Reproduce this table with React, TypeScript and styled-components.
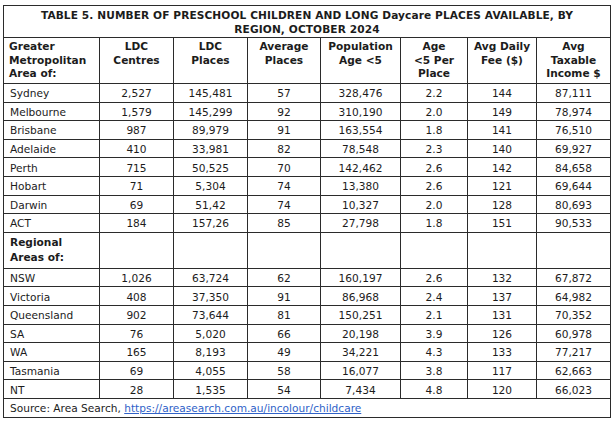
import styled, { createGlobalStyle } from 'styled-components'

type Row = [string, string, string, string, string, string, string, string]

const metro: Row[] = [
  ['Sydney', '2,527', '145,481', '57', '328,476', '2.2', '144', '87,111'],
  ['Melbourne', '1,579', '145,299', '92', '310,190', '2.0', '149', '78,974'],
  ['Brisbane', '987', '89,979', '91', '163,554', '1.8', '141', '76,510'],
  ['Adelaide', '410', '33,981', '82', '78,548', '2.3', '140', '69,927'],
  ['Perth', '715', '50,525', '70', '142,462', '2.6', '142', '84,658'],
  ['Hobart', '71', '5,304', '74', '13,380', '2.6', '121', '69,644'],
  ['Darwin', '69', '51,42', '74', '10,327', '2.0', '128', '80,693'],
  ['ACT', '184', '157,26', '85', '27,798', '1.8', '151', '90,533'],
]

const regional: Row[] = [
  ['NSW', '1,026', '63,724', '62', '160,197', '2.6', '132', '67,872'],
  ['Victoria', '408', '37,350', '91', '86,968', '2.4', '137', '64,982'],
  ['Queensland', '902', '73,644', '81', '150,251', '2.1', '131', '70,352'],
  ['SA', '76', '5,020', '66', '20,198', '3.9', '126', '60,978'],
  ['WA', '165', '8,193', '49', '34,221', '4.3', '133', '77,217'],
  ['Tasmania', '69', '4,055', '58', '16,077', '3.8', '117', '62,663'],
  ['NT', '28', '1,535', '54', '7,434', '4.8', '120', '66,023'],
]

const columnWidths = [96, 74, 74, 73, 80, 67, 69, 74]

const headings: string[][] = [
  ['Greater', 'Metropolitan', 'Area of:'],
  ['LDC', 'Centres'],
  ['LDC', 'Places'],
  ['Average', 'Places'],
  ['Population', 'Age <5'],
  ['Age', '<5 Per', 'Place'],
  ['Avg Daily', 'Fee ($)'],
  ['Avg', 'Taxable', 'Income $'],
]

export default function App() {
  return (
    <>
      <GlobalStyle />
      <Page>
        <Table>
          <colgroup>
            {columnWidths.map((w, i) => (
              <col key={i} style={{ width: w }} />
            ))}
          </colgroup>
          <tbody>
            <tr>
              <TitleCell colSpan={8}>
                TABLE 5. NUMBER OF PRESCHOOL CHILDREN AND LONG Daycare PLACES AVAILABLE, BY
                <br />
                REGION, OCTOBER 2024
              </TitleCell>
            </tr>
            <tr>
              {headings.map((lines, i) => (
                <HeadCell key={i} $first={i === 0}>
                  {lines.map((line, j) => (
                    <span key={j}>
                      {j > 0 && <br />}
                      {line}
                    </span>
                  ))}
                </HeadCell>
              ))}
            </tr>
            {metro.map((row) => (
              <DataRow key={row[0]} row={row} />
            ))}
            <tr>
              <SectionCell>
                Regional
                <br />
                Areas of:
              </SectionCell>
              {Array.from({ length: 7 }).map((_, i) => (
                <SectionCell key={i} />
              ))}
            </tr>
            {regional.map((row) => (
              <DataRow key={row[0]} row={row} />
            ))}
            <tr>
              <SourceCell colSpan={8}>
                Source: Area Search,{' '}
                <SourceLink href="#">https://areasearch.com.au/incolour/childcare</SourceLink>
              </SourceCell>
            </tr>
          </tbody>
        </Table>
      </Page>
    </>
  )
}

function DataRow({ row }: { row: Row }) {
  return (
    <tr>
      {row.map((value, i) => (
        <Cell key={i} $first={i === 0}>
          {value}
        </Cell>
      ))}
    </tr>
  )
}

const GlobalStyle = createGlobalStyle`
  html, body {
    margin: 0;
    padding: 0;
    background: #ffffff;
  }
`

const Page = styled.main`
  width: 616px;
  height: 423px;
  padding: 5px 0 0 3px;
  box-sizing: border-box;
  font-family: "DejaVu Sans", Verdana, sans-serif;
  font-size: 10.6px;
  color: #1c1c1c;
`

const Table = styled.table`
  border-collapse: collapse;
  table-layout: fixed;
  width: 607px;

  td {
    border: 1px solid #2b2b2b;
  }
`

const TitleCell = styled.td`
  height: 31px;
  padding: 0 4px;
  text-align: center;
  font-weight: bold;
  line-height: 14px;
  letter-spacing: 0.1px;
`

const HeadCell = styled.td<{ $first?: boolean }>`
  height: 43px;
  padding: 2px 5px 0;
  vertical-align: top;
  font-weight: bold;
  line-height: 13.5px;
  text-align: ${({ $first }) => ($first ? 'left' : 'center')};
`

const Cell = styled.td<{ $first?: boolean }>`
  height: 16.6px;
  padding: 1px 6px 0;
  line-height: 14px;
  white-space: nowrap;
  text-align: ${({ $first }) => ($first ? 'left' : 'center')};
`

const SectionCell = styled.td`
  height: 33px;
  padding: 2px 6px 0;
  vertical-align: top;
  font-weight: bold;
  line-height: 15px;
`

const SourceCell = styled.td`
  height: 17px;
  padding: 1px 6px 0;
  line-height: 14px;
`

const SourceLink = styled.a`
  color: #2f62c8;
  text-decoration: underline;
`
